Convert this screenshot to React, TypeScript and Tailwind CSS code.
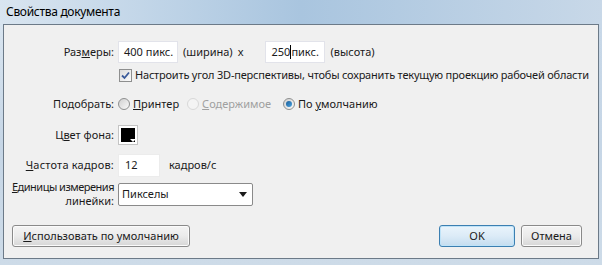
import React from "react";

const font = { fontFamily: '"Noto Sans", "Open Sans", sans-serif' };

function TextBox({ value, w, caret }: { value: string; w: number; caret?: boolean }) {
  return (
    <div
      className="h-[22px] shrink-0 bg-white border border-[#e2e3ea] flex items-center pl-[5px] text-[11px] text-[#1a1a1a] whitespace-nowrap"
      style={{ width: w }}
    >
      {caret ? (
        <>
          <span>250</span>
          <span className="inline-block w-px h-[14px] bg-black" />
          <span>пикс.</span>
        </>
      ) : (
        value
      )}
    </div>
  );
}

function Radio({ checked, disabled }: { checked?: boolean; disabled?: boolean }) {
  return (
    <span
      className={
        "inline-flex shrink-0 items-center justify-center w-[12px] h-[12px] rounded-full border " +
        (disabled ? "border-[#d8d8d8] bg-[#f4f4f4]" : "border-[#8e8f8f] bg-gradient-to-br from-[#d0d0d0] to-[#fafafa]")
      }
    >
      {checked && <span className="w-[6px] h-[6px] rounded-full bg-gradient-to-br from-[#1a5e9a] to-[#4aa3e0]" />}
    </span>
  );
}

function Btn({ children, w, primary }: { children: React.ReactNode; w: number; primary?: boolean }) {
  return (
    <div
      className={
        "h-[22px] shrink-0 rounded-[3px] border flex items-center justify-center text-[11px] text-[#1a1a1a] whitespace-nowrap " +
        (primary
          ? "border-[#3c7fb1] bg-gradient-to-b from-[#eaf4fb] via-[#dcebf7] to-[#c4dcef] shadow-[inset_0_0_0_1px_#bfe3f8]"
          : "border-[#8a8a8a] bg-gradient-to-b from-[#f4f4f4] via-[#ebebeb] to-[#d6d6d6] shadow-[inset_0_0_0_1px_#fbfbfb]")
      }
      style={{ width: w }}
    >
      {children}
    </div>
  );
}

function Label({ children }: { children: React.ReactNode }) {
  return (
    <div className="w-[114px] shrink-0 pr-[4px] flex justify-end whitespace-nowrap">{children}</div>
  );
}

export default function App() {
  return (
    <div
      className="w-[602px] h-[265px] relative overflow-hidden bg-gradient-to-r from-[#d9e5f0] via-[#a9c5df] to-[#c8d8e8] flex flex-col"
      style={font}
    >
      <div className="h-[24px] flex items-center pl-[6px] text-[12px] tracking-[-0.3px] text-black shrink-0">
        Свойства документа
      </div>
      <div className="flex-1 flex flex-col pl-[3px] pr-[3px] pb-[6px] bg-gradient-to-b from-transparent via-[#c6d6e6] to-[#cddbe8]">
        <div className="flex-1 bg-[#f0f0f0] border border-[#6c7a88] flex flex-col text-[11px] text-[#1a1a1a] whitespace-nowrap">
          {/* Размеры */}
          <div className="flex items-center mt-[16px] h-[22px]">
            <Label>
              <span>
                Раз<u>м</u>еры:
              </span>
            </Label>
            <TextBox value="400 пикс." w={60} />
            <span className="ml-[5px]">(ширина)</span>
            <span className="ml-[5px]">x</span>
            <div className="ml-[22px]">
              <TextBox value="" w={60} caret />
            </div>
            <span className="ml-[5px]">(высота)</span>
          </div>
          {/* Checkbox */}
          <div className="flex items-center mt-[4px] h-[16px] pl-[115px]">
            <span className="w-[13px] h-[13px] shrink-0 border border-[#8e8f8f] bg-gradient-to-br from-[#dcdcdc] to-[#fbfbfb] flex items-center justify-center">
              <svg width="9" height="9" viewBox="0 0 9 9">
                <path d="M1 4.5 L3.5 7 L8 1.5" stroke="#3a5a9a" strokeWidth="1.8" fill="none" />
              </svg>
            </span>
            <span className="ml-[3px] tracking-[-0.2px]">
              Настроить угол 3D-перспективы, чтобы сохранить текущую проекцию рабочей области
            </span>
          </div>
          {/* Подобрать */}
          <div className="flex items-center mt-[13px] h-[16px]">
            <Label>Подобрать:</Label>
            <Radio />
            <span className="ml-[3px]">
              <u>П</u>ринтер
            </span>
            <span className="ml-[8px] inline-flex">
              <Radio disabled />
            </span>
            <span className="ml-[3px] text-[#a0a0a0]">
              <u>С</u>одержимое
            </span>
            <span className="ml-[12px] inline-flex">
              <Radio checked />
            </span>
            <span className="ml-[3px]">
              По <u>у</u>молчанию
            </span>
          </div>
          {/* Цвет фона */}
          <div className="flex items-center mt-[13px] h-[20px]">
            <Label>
              <span>
                Ц<u>в</u>ет фона:
              </span>
            </Label>
            <div className="w-[20px] h-[20px] shrink-0 border border-[#c4c4c4] bg-white p-[2px] relative">
              <div className="w-full h-full bg-black" />
              <svg className="absolute right-[1px] bottom-[1px]" width="6" height="4" viewBox="0 0 6 4">
                <path d="M0 0 H6 L3 3 Z" fill="#fff" />
              </svg>
            </div>
          </div>
          {/* Частота кадров */}
          <div className="flex items-center mt-[9px] h-[23px]">
            <Label>
              <span className="tracking-[0.2px]">
                <u>Ч</u>астота кадров:
              </span>
            </Label>
            <div className="w-[42px] h-[23px] shrink-0 bg-white border border-[#ececec] flex items-center pl-[6px]">12</div>
            <span className="ml-[9px]">кадров/с</span>
          </div>
          {/* Единицы */}
          <div className="flex items-center mt-[5px] h-[24px]">
            <div className="w-[114px] shrink-0 pr-[4px] flex flex-col items-end leading-[14px]">
              <div className="tracking-[-0.5px]">
                <u>Е</u>диницы измерения
              </div>
              <div>линейки:</div>
            </div>
            <div className="w-[135px] h-[23px] shrink-0 bg-white border border-[#8a8a8a] rounded-[2px] flex items-center pl-[3px] justify-between pr-[5px]">
              <span>Пикселы</span>
              <svg width="8" height="5" viewBox="0 0 8 5">
                <path d="M0 0 H8 L4 5 Z" fill="#1a1a1a" />
              </svg>
            </div>
          </div>
          {/* Buttons */}
          <div className="flex items-center mt-[19px] px-[8px]">
            <Btn w={178}>
              <span>
                <u>И</u>спользовать по умолчанию
              </span>
            </Btn>
            <div className="flex-1" />
            <Btn w={76} primary>
              OK
            </Btn>
            <div className="ml-[6px] mr-[8px]">
              <Btn w={61}>Отмена</Btn>
            </div>
          </div>
        </div>
      </div>
    </div>
  );
}
